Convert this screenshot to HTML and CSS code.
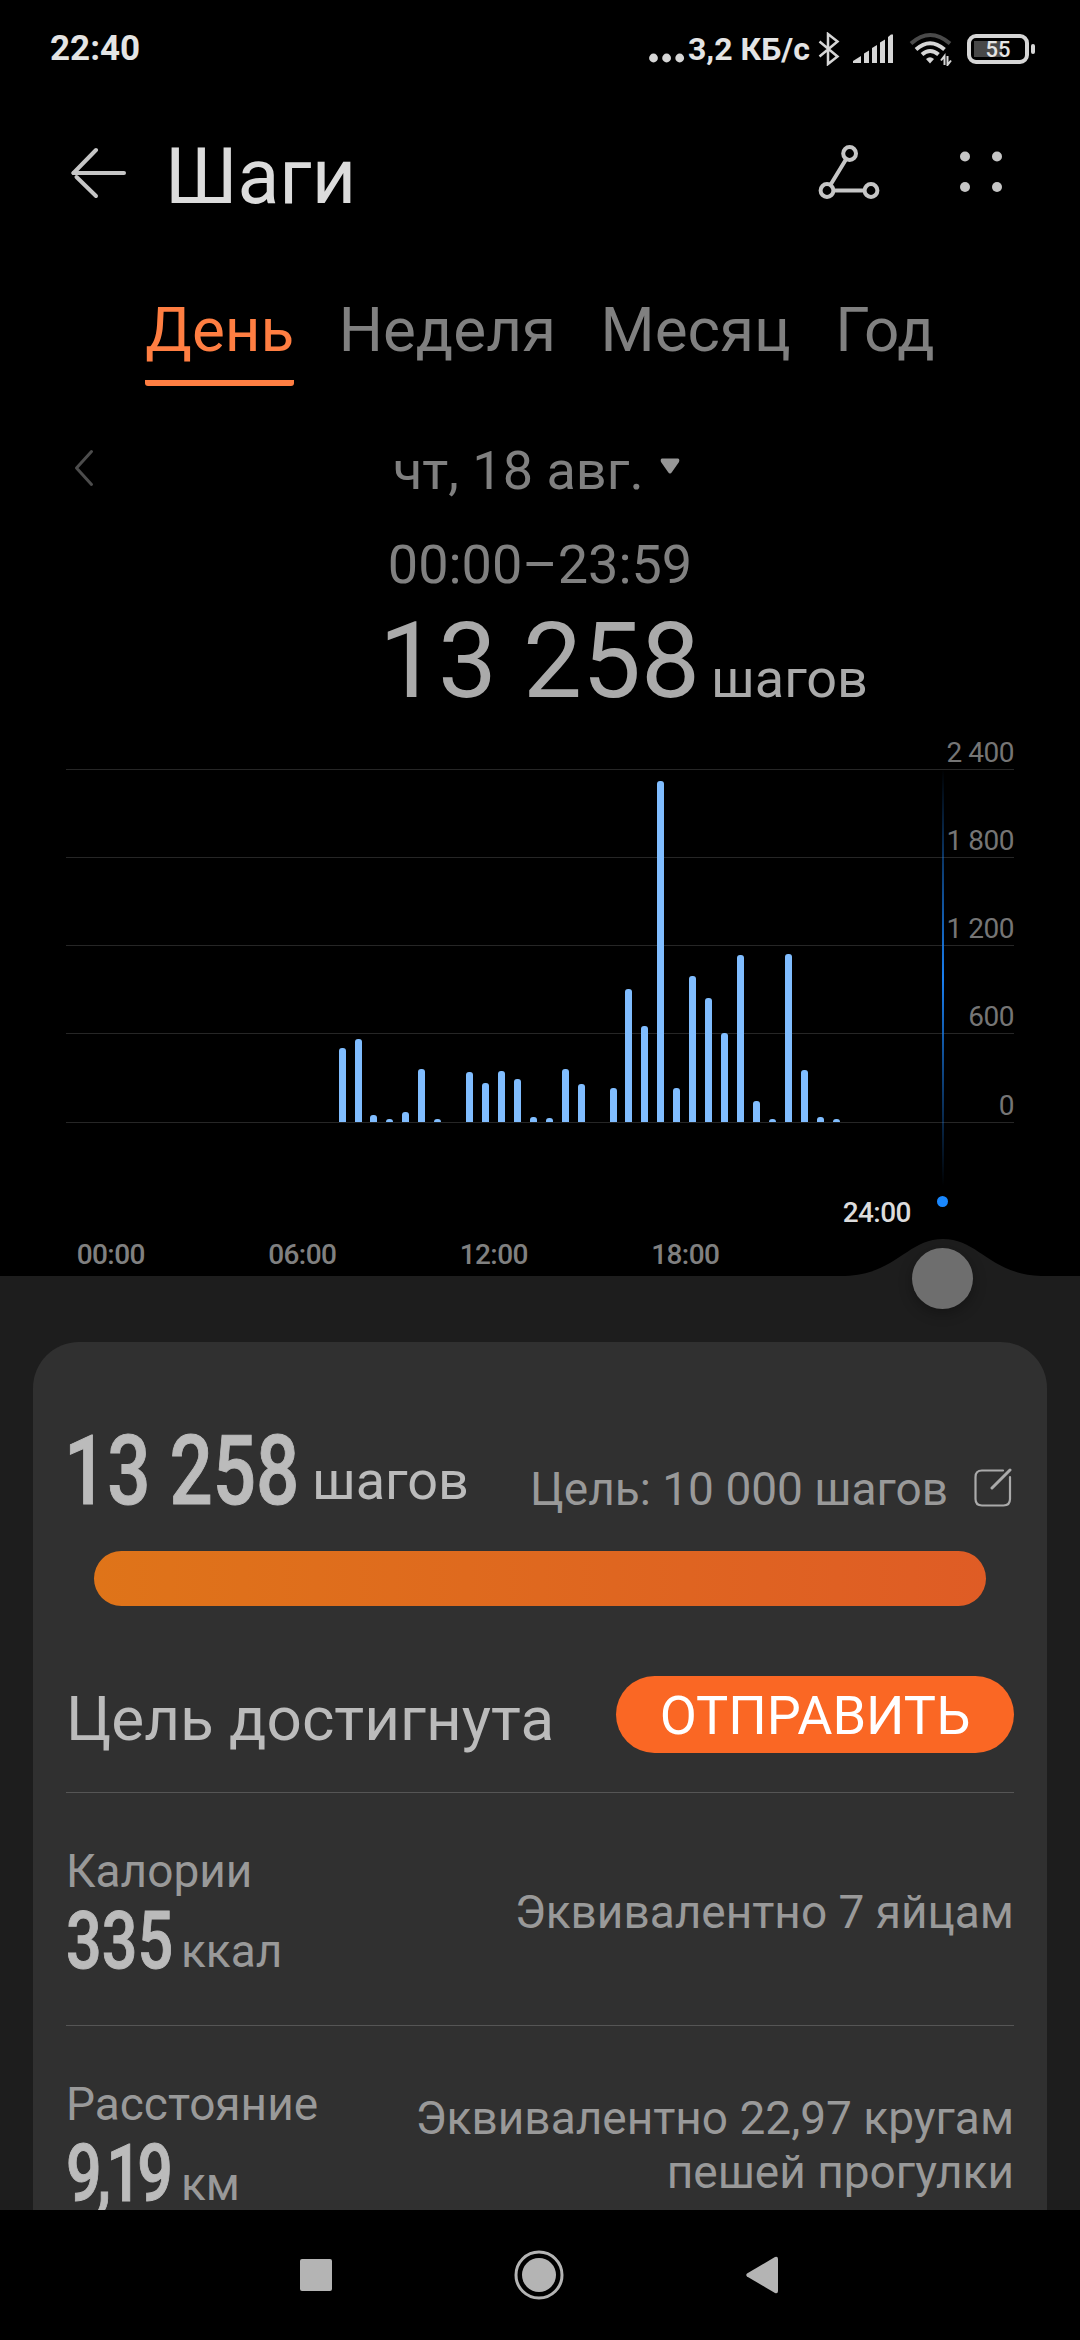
FILE: index.html
```html
<!DOCTYPE html>
<html lang="ru">
<head>
    <meta charset="UTF-8">
    <meta name="viewport" content="width=device-width, initial-scale=1.0">
    <title>Шаги</title>
    <link rel="stylesheet" href="styles.css">
</head>
<body>
    <div class="status-bar">
        <span class="clock">22:40</span>
        <div class="status-icons">
            <svg class="dots" width="36" height="10" viewBox="0 0 36 10" fill="#d6d6d6">
                <circle cx="4.5" cy="5" r="4.4"/><circle cx="17.6" cy="5" r="4.4"/><circle cx="30.7" cy="5" r="4.4"/>
            </svg>
            <span class="speed">3,2 КБ/с</span>
            <svg class="bluetooth" width="22" height="34" viewBox="0 0 22 34" fill="none" stroke="#d6d6d6" stroke-width="2.5">
                <path d="M1.5 9.5 L19.5 24.5 L10 32 V2 L19.5 9.5 L1.5 24.5"/>
            </svg>
            <svg class="signal" width="41" height="29" viewBox="0 0 41 29" fill="#d6d6d6">
                <path d="M0 29V27L8 22V29Z"/><path d="M11 19.500L16 16.500V29H11Z"/><path d="M19 14L24 11V29H19Z"/><path d="M27 8.500L32 5.500V29H27Z"/><path d="M35 3L38 .5H40V29H35Z"/>
            </svg>
            <svg class="wifi" width="44" height="34" viewBox="0 0 44 34" fill="none" stroke="#d6d6d6" stroke-width="4">
                <path d="M2 11.500Q21 -5.500 41 11.500" stroke="#4a4a4a"/>
                <path d="M7 17.500Q21 5 35.500 17.500"/>
                <path d="M13 22.500Q21 15.500 29.500 22.500"/>
                <path d="M17 27Q21 23.500 25 27L21 31.500Z" fill="#d6d6d6" stroke="none"/>
                <path d="M35.500 33V24L32 28.500M38.500 24V33L42 28.500" stroke-width="2"/>
            </svg>
            <div class="battery"><span>55</span></div>
        </div>
    </div>

    <header class="toolbar">
        <svg class="back" width="56" height="52" viewBox="0 0 56 52" fill="none" stroke="#c6c6c6" stroke-width="4" stroke-linecap="round">
            <path d="M2.500 26H53"/><path d="M2.500 26L25 3"/><path d="M5.500 30L25 49"/>
        </svg>
        <h1>Шаги</h1>
        <svg class="share" width="62" height="56" viewBox="0 0 62 56" fill="none" stroke="#c6c6c6" stroke-width="4">
            <circle cx="31.600" cy="9.500" r="6.400"/><circle cx="9" cy="46.500" r="6.400"/><circle cx="53" cy="46.500" r="6.400"/>
            <path d="M28.200 15L12.400 41M15.500 46.500H46.500"/>
        </svg>
        <svg class="menu" width="42" height="42" viewBox="0 0 42 42" fill="#c6c6c6">
            <circle cx="5" cy="5.500" r="5"/><circle cx="37" cy="5.500" r="5"/><circle cx="5" cy="36" r="5"/><circle cx="37" cy="36" r="5"/>
        </svg>
    </header>

    <nav class="tabs">
        <a class="tab active">День</a>
        <a class="tab">Неделя</a>
        <a class="tab">Месяц</a>
        <a class="tab">Год</a>
    </nav>

    <div class="date-row">
        <svg class="prev" width="20" height="38" viewBox="0 0 20 38" fill="none" stroke="#4c4c4c" stroke-width="3" stroke-linecap="round" stroke-linejoin="round">
            <path d="M17.500 2.500L2.500 19L17.500 35.500"/>
        </svg>
        <span class="date">чт, 18 авг.</span>
        <svg width="20" height="16" viewBox="0 0 20 16" fill="#969696">
            <path d="M2 .5H18Q20 1 19 4L12 14Q10 17 8 14L1 4Q0 1 2 .5Z"/>
        </svg>
    </div>
    <div class="range">00:00–23:59</div>
    <div class="total"><span class="total-value">13 258</span><span class="unit">шагов</span></div>

    <section class="chart">
        <div class="plot">
            <div class="grid-row first">2 400</div>
            <div class="grid-row">1 800</div>
            <div class="grid-row">1 200</div>
            <div class="grid-row">600</div>
            <div class="grid-row last">0</div>
            <!-- one column per half hour -->
            <div class="bars">
                <i style="grid-column: 15; height: 74px"></i>
                <i style="grid-column: 16; height: 83px"></i>
                <i style="grid-column: 17; height: 7px"></i>
                <i style="grid-column: 18; height: 3px"></i>
                <i style="grid-column: 19; height: 10px"></i>
                <i style="grid-column: 20; height: 53px"></i>
                <i style="grid-column: 21; height: 3px"></i>
                <i style="grid-column: 23; height: 50px"></i>
                <i style="grid-column: 24; height: 39px"></i>
                <i style="grid-column: 25; height: 51px"></i>
                <i style="grid-column: 26; height: 43px"></i>
                <i style="grid-column: 27; height: 5px"></i>
                <i style="grid-column: 28; height: 4px"></i>
                <i style="grid-column: 29; height: 53px"></i>
                <i style="grid-column: 30; height: 38px"></i>
                <i style="grid-column: 32; height: 34px"></i>
                <i style="grid-column: 33; height: 133px"></i>
                <i style="grid-column: 34; height: 96px"></i>
                <i style="grid-column: 35; height: 341px"></i>
                <i style="grid-column: 36; height: 34px"></i>
                <i style="grid-column: 37; height: 146px"></i>
                <i style="grid-column: 38; height: 124px"></i>
                <i style="grid-column: 39; height: 89px"></i>
                <i style="grid-column: 40; height: 167px"></i>
                <i style="grid-column: 41; height: 21px"></i>
                <i style="grid-column: 42; height: 3px"></i>
                <i style="grid-column: 43; height: 168px"></i>
                <i style="grid-column: 44; height: 52px"></i>
                <i style="grid-column: 45; height: 5px"></i>
                <i style="grid-column: 46; height: 3px"></i>
            </div>
        </div>
        <div class="hours">
            <span>00:00</span>
            <span>06:00</span>
            <span>12:00</span>
            <span>18:00</span>
            <span class="current">24:00</span>
        </div>
        <div class="cursor-line"></div>
        <div class="cursor-dot"></div>
        <svg class="bump" width="196" height="38" viewBox="0 0 196 38" fill="#1d1d1d">
            <path d="M0 38C52 36 62 1 98 1S144 36 196 38Z"/>
        </svg>
        <div class="knob"></div>
    </section>

    <main class="sheet">
        <div class="card">
            <div class="summary">
                <span class="big">13 258</span>
                <span class="summary-unit">шагов</span>
                <span class="goal">Цель: 10 000 шагов</span>
                <svg class="edit" width="38" height="39" viewBox="0 0 38 39" fill="none" stroke="#aaa" stroke-width="2.200" stroke-linecap="round">
                    <path d="M29 2.500H8Q1.500 2.500 1.500 9V31Q1.500 37.500 8 37.500H29.500Q36 37.500 36 31V9"/>
                    <path d="M18 20L36 2" stroke-width="3"/>
                </svg>
            </div>
            <div class="progress"></div>
            <div class="achieved">
                <span>Цель достигнута</span>
                <button>ОТПРАВИТЬ</button>
            </div>
            <div class="metric">
                <div class="metric-main">
                    <div class="label">Калории</div>
                    <div class="value"><b class="num">335</b><span>ккал</span></div>
                </div>
                <p>Эквивалентно 7 яйцам</p>
            </div>
            <div class="metric">
                <div class="metric-main">
                    <div class="label">Расстояние</div>
                    <div class="value"><b class="num decimal">9,19</b><span>км</span></div>
                </div>
                <p>Эквивалентно 22,97 кругам<br>пешей прогулки</p>
            </div>
        </div>
    </main>

    <footer class="nav-bar">
        <svg width="32" height="32" viewBox="0 0 32 32"><rect width="32" height="32" rx="2" fill="#b4b4b4"/></svg>
        <svg width="50" height="50" viewBox="0 0 50 50"><circle cx="25" cy="25" r="23" fill="none" stroke="#b4b4b4" stroke-width="3"/><circle cx="25" cy="25" r="17" fill="#b4b4b4"/></svg>
        <svg width="32" height="38" viewBox="0 0 32 38"><path d="M1 17.500L29 1Q32 0 32 3V35Q32 38 29 37L1 20.500Q-.5 19 1 17.500Z" fill="#b4b4b4"/></svg>
    </footer>
</body>
</html>
```

FILE: styles.css
```css
* {
    box-sizing: border-box;
}

body {
    margin: 0;
    width: 1080px;
    height: 2340px;
    overflow: hidden;
    background-color: #000;
    color: #808080;
    font-family: Roboto, "Noto Sans", sans-serif;
}

svg {
    display: block;
    flex: none;
}

.status-bar {
    display: flex;
    justify-content: space-between;
    align-items: center;
    height: 97px;
    padding: 0 45px 0 50px;
    color: #e4e4e4;
    font-weight: 700;
}

.clock {
    font-size: 35px;
}

.status-icons {
    display: flex;
    align-items: center;
}

.dots {
    margin: 18px 3px 0 0;
}

.speed {
    width: 122px;
    margin-right: 8px;
    font-size: 32px;
    white-space: nowrap;
}

.bluetooth {
    margin-right: 13px;
}

.signal {
    margin-right: 15px;
}

.wifi {
    margin-right: 14px;
}

.battery {
    position: relative;
    width: 62px;
    height: 30px;
    margin-right: 6px;
    border: 4px solid #d6d6d6;
    border-radius: 9px;
    background: linear-gradient(#484848, #484848) 3px 3px / 28px 16px no-repeat;
    font-size: 22px;
    font-weight: 500;
    line-height: 23px;
    text-align: center;
}

.battery::after {
    content: "";
    position: absolute;
    right: -10px;
    top: 6px;
    width: 4px;
    height: 10px;
    border-radius: 2px;
    background-color: #d6d6d6;
}

.toolbar {
    display: flex;
    align-items: center;
    height: 153px;
    padding: 0 78px 0 71px;
    color: #dcdcdc;
}

.toolbar h1 {
    margin: 6px 0 0 38px;
    font-size: 77px;
    font-weight: 400;
}

.back {
    margin-bottom: 1px;
}

.share {
    margin: 0 80px 3px auto;
}

.menu {
    margin-bottom: 3px;
}

.tabs {
    display: flex;
    justify-content: center;
    gap: 44.5px;
    height: 136px;
    padding-top: 44px;
    font-size: 62px;
    line-height: 72px;
}

.tab {
    height: 92px;
}

.tab.active {
    color: #ff7e42;
    border-bottom: 6px solid #ff7e42;
    border-radius: 3px;
}

.date-row {
    display: flex;
    align-items: center;
    height: 72px;
    margin-top: 48px;
    padding-left: 74px;
    font-size: 54px;
}

.prev {
    margin-right: 299px;
    margin-bottom: 5px;
}

.date {
    margin-right: 16px;
}

.date + svg {
    margin-bottom: 8px;
}

.range {
    margin-top: 23px;
    font-size: 54px;
    line-height: 71px;
    text-align: center;
}

.total {
    display: flex;
    align-items: baseline;
    height: 103px;
    margin-top: 10px;
    padding-left: 379px;
    color: #aaa;
    line-height: 104px;
}

.total-value {
    font-size: 105px;
}

.unit {
    margin-left: 11px;
    font-size: 54px;
}

.chart {
    position: relative;
    height: 563px;
}

.plot {
    position: relative;
    margin: 0 66px;
}

.grid-row {
    display: flex;
    justify-content: flex-end;
    align-items: flex-end;
    height: 88px;
    padding-bottom: 2px;
    border-bottom: 1px solid #262626;
    font-size: 28px;
    line-height: 28px;
    letter-spacing: -.5px;
    color: #757575;
}

.grid-row.first {
    height: 57px;
}

.grid-row.last {
    height: 89px;
}

.bars {
    position: absolute;
    left: 45px;
    bottom: 1px;
    display: grid;
    grid-template-columns: repeat(48, 15.94px);
    align-items: end;
    justify-items: center;
}

.bars i {
    grid-row: 1;
    width: 7px;
    border-radius: 3px 3px 0 0;
    background-color: #80bdff;
}

.hours {
    display: grid;
    grid-template-columns: repeat(5, 191.5px);
    align-items: end;
    height: 153px;
    padding: 0 0 7px 15px;
    font-size: 28px;
    font-weight: 500;
    line-height: 28px;
    letter-spacing: -.6px;
    text-align: center;
}

.hours .current {
    padding-bottom: 42px;
    color: #dcdcdc;
}

.cursor-line {
    position: absolute;
    left: 942px;
    top: 56px;
    width: 2px;
    height: 417px;
    background: linear-gradient(transparent, #1a7ff0, transparent);
}

.cursor-dot {
    position: absolute;
    left: 937px;
    top: 483px;
    width: 11px;
    height: 11px;
    border-radius: 50%;
    background-color: #1a88ff;
}

.bump {
    position: absolute;
    left: 845px;
    bottom: 0;
}

.knob {
    position: absolute;
    left: 912px;
    top: 535px;
    z-index: 1;
    width: 61px;
    height: 61px;
    border-radius: 50%;
    background-color: #6e6e6e;
    box-shadow: 0 4px 14px rgba(0, 0, 0, .3);
}

.sheet {
    height: 934px;
    padding: 66px 33px 0;
    overflow: hidden;
    background-color: #1d1d1d;
}

.card {
    height: 920px;
    padding: 0 33px;
    border-radius: 46px;
    background-color: #303030;
    color: #999;
}

.summary {
    display: flex;
    align-items: flex-start;
    height: 209px;
    padding-top: 78px;
    white-space: nowrap;
}

/* narrow numerals */
.big, .num {
    display: inline-block;
    color: #bbb;
    font-weight: 500;
    -webkit-text-stroke: 1px #bbb;
    transform: scaleX(.785);
    transform-origin: 0 0;
}

.big {
    width: 248px;
    margin: 3px 0 0 -2px;
    font-size: 97px;
    line-height: 97px;
}

.summary-unit {
    margin-top: 34px;
    color: #bbb;
    font-size: 54px;
    line-height: 54px;
}

.goal {
    margin: 46px 26px 0 auto;
    font-size: 46px;
    line-height: 46px;
}

.edit {
    margin: 48px 2px 0 0;
}

.progress {
    height: 55px;
    margin: 0 28px;
    border-radius: 28px;
    background: linear-gradient(to right, #df7419, #df5c25);
}

.achieved {
    display: flex;
    justify-content: space-between;
    align-items: center;
    height: 186px;
    padding-top: 32px;
    color: #bbb;
    font-size: 62px;
}

.achieved span {
    padding-top: 6px;
}

.achieved button {
    width: 398px;
    height: 77px;
    margin-bottom: 2px;
    padding: 4px 0 0;
    border: 0;
    border-radius: 39px;
    background-color: #fa6724;
    color: #fff;
    font-family: inherit;
    font-size: 54px;
    line-height: 72px;
}

.metric {
    display: flex;
    justify-content: space-between;
    align-items: center;
    height: 233px;
    border-top: 1px solid #555;
    font-size: 46px;
    line-height: 54px;
}

.metric p {
    margin: 5px 0 0;
    text-align: right;
}

.metric-main {
    height: 130px;
}

.value {
    display: flex;
    align-items: flex-start;
    height: 80px;
    margin-top: 3px;
}

.value span {
    margin-top: 23px;
}

.num {
    width: 115px;
    font-size: 80px;
    line-height: 80px;
}

.num.decimal {
    letter-spacing: -6px;
}

.nav-bar {
    display: flex;
    align-items: center;
    gap: 182px;
    height: 130px;
    padding-left: 300px;
}
```
